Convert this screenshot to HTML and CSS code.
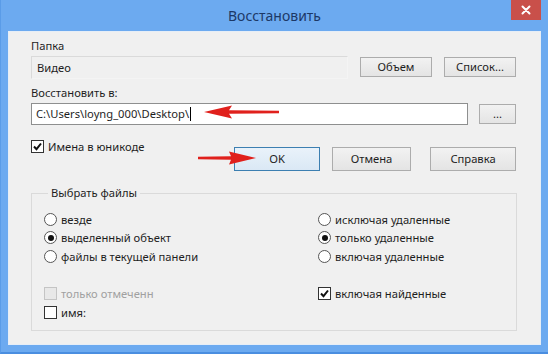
FILE: index.html
```html
<!DOCTYPE html>
<html lang="ru">
<head>
<meta charset="utf-8">
<title>Восстановить</title>
<link rel="stylesheet" href="styles.css">
</head>
<body>
<div class="window">
  <div class="titlebar">
    <span></span>
    <div class="title">Восстановить</div>
    <div class="close-wrap">
      <div class="close">
        <svg width="10" height="10" viewBox="0 0 10 10"><path d="M1.5 1.5 L8.5 8.5 M8.5 1.5 L1.5 8.5" stroke="#fff" stroke-width="2" stroke-linecap="round"/></svg>
      </div>
    </div>
  </div>
  <div class="content">
    <div class="label lbl-folder">Папка</div>
    <div class="row row-folder">
      <div class="field ro">Видео</div>
      <button class="btn btn-size">Объем</button>
      <button class="btn btn-list">Список...</button>
    </div>
    <div class="label lbl-restore">Восстановить в:</div>
    <div class="row row-path">
      <div class="field path">C:\Users\loyng_000\Desktop\<span class="caret"></span></div>
      <button class="btn btn-dots">...</button>
    </div>
    <div class="check-line uni">
      <span class="cb checked"><svg width="11" height="11" viewBox="0 0 11 11"><path d="M2 5.5 L4.5 8.2 L9 2.5" fill="none" stroke="#111" stroke-width="2"/></svg></span>
      <span>Имена в юникоде</span>
    </div>
    <div class="row row-btns">
      <button class="btn btn-ok">OK</button>
      <button class="btn btn-cancel">Отмена</button>
      <button class="btn btn-help">Справка</button>
    </div>
    <fieldset class="group">
      <legend>Выбрать файлы</legend>
      <div class="opts">
        <div class="opt"><span class="rb"></span><span>везде</span></div>
        <div class="opt"><span class="rb"></span><span>исключая удаленные</span></div>
        <div class="opt"><span class="rb on"></span><span>выделенный объект</span></div>
        <div class="opt"><span class="rb on"></span><span>только удаленные</span></div>
        <div class="opt"><span class="rb"></span><span>файлы в текущей панели</span></div>
        <div class="opt"><span class="rb"></span><span>включая удаленные</span></div>
        <div class="opt"></div>
        <div class="opt"></div>
        <div class="opt disabled"><span class="cb dis"></span><span>только отмеченн</span></div>
        <div class="opt"><span class="cb checked"><svg width="11" height="11" viewBox="0 0 11 11"><path d="M2 5.5 L4.5 8.2 L9 2.5" fill="none" stroke="#111" stroke-width="2"/></svg></span><span>включая найденные</span></div>
        <div class="opt"><span class="cb"></span><span>имя:</span></div>
        <div class="opt"></div>
      </div>
    </fieldset>
  </div>
  <svg class="arrow arrow-left" width="76" height="14" viewBox="0 0 76 14">
    <path d="M0 7 L28 0.5 L25 5.2 L75 5.8 L75 8.2 L25 8.8 L28 13.5 Z" fill="#e0201c"/>
  </svg>
  <svg class="arrow arrow-right" width="58" height="14" viewBox="0 0 58 14">
    <path d="M58 7 L31 0.5 L33 5.2 L0 5.8 L0 8.2 L33 8.8 L31 13.5 Z" fill="#e0201c"/>
  </svg>
</div>
</body>
</html>
```
FILE: styles.css
```css
* { box-sizing: border-box; }
html, body { margin: 0; padding: 0; background: #6caaf0; }
body {
  width: 548px;
  height: 354px;
  overflow: hidden;
  font-family: "Noto Sans", "Open Sans", sans-serif;
  font-size: 11.2px;
  color: #1e1e1e;
}
.window {
  position: relative;
  width: 548px;
  height: 354px;
  background: #6caaf0;
  border-bottom: 2px solid #4a8ee0;
  border-left: 1px solid #5a9ce8;
  display: flex;
  flex-direction: column;
}
.titlebar {
  height: 31px;
  display: grid;
  grid-template-columns: 1fr auto 1fr;
}
.title {
  font-size: 14px;
  line-height: 31px;
  color: #1c3866;
}
.close-wrap { display: flex; justify-content: flex-end; padding-right: 7px; }
.close {
  width: 30px;
  height: 20px;
  background: #c9504a;
  display: flex;
  align-items: center;
  justify-content: center;
}
.content {
  flex: 1;
  margin: 0 7px 7px 7px;
  background: #f0f0f0;
  border: 1px solid #e6eef7;
  padding: 6px 24px 0 22px;
}
.label { line-height: 16px; }
.row { display: flex; align-items: flex-start; }
.row-folder { margin-top: 2px; height: 23px; }
.field {
  height: 23px;
  line-height: 21px;
  padding-left: 5px;
}
.ro {
  width: 317px;
  border: 1px solid #dadada;
  border-right-color: #f4f4f4;
  border-bottom-color: #f4f4f4;
  background: #f0f0f0;
}
.btn {
  font-family: inherit;
  font-size: 11.2px;
  color: #1e1e1e;
  height: 20px;
  padding: 0;
  border: 1px solid #acacac;
  background: linear-gradient(#f2f2f2, #e4e4e4);
  border-radius: 0;
  line-height: 18px;
}
.btn-size { width: 72px; margin-left: 12px; margin-top: 1px; }
.btn-list { width: 72px; margin-left: 12px; margin-top: 1px; }
.lbl-restore { margin-top: 6px; }
.row-path { margin-top: 2px; }
.path {
  width: 437px;
  height: 22px;
  line-height: 20px;
  background: #fff;
  border: 1px solid #8e8f8f;
  padding-left: 4px;
}
.caret {
  display: inline-block;
  width: 1px;
  height: 14px;
  background: #000;
  vertical-align: -3px;
  margin-left: 1px;
}
.btn-dots { width: 37px; margin-left: 11px; margin-top: 1px; }
.check-line {
  display: flex;
  align-items: center;
  gap: 4px;
  height: 16px;
  margin-top: 13px;
}
.cb {
  width: 13px;
  height: 13px;
  border: 1px solid #333;
  background: #fff;
  display: inline-flex;
  align-items: center;
  justify-content: center;
  flex: none;
}
.cb.dis { border-color: #c4c4c4; background: #e8e8e8; }
.row-btns { margin-top: -7px; padding-left: 203px; }
.row-btns .btn { height: 24px; line-height: 22px; }
.btn-ok {
  width: 86px;
  border-color: #3c7fb1;
  background: linear-gradient(#e9f2fa, #dae8f5);
}
.btn-cancel { width: 79px; margin-left: 12px; }
.btn-help { width: 86px; margin-left: 19px; }
.group {
  margin: 14px 0 0 0;
  width: 486px;
  padding: 0 0 8px 12px;
  border: 1px solid #dadada;
  border-radius: 0;
}
.group legend {
  margin-left: 4px;
  padding: 0 3px;
  line-height: 16px;
}
.opts {
  display: grid;
  grid-template-columns: 274px 1fr;
  grid-auto-rows: 18.6px;
  padding-top: 9px;
}
.opt {
  display: flex;
  align-items: center;
  gap: 4px;
}
.opt.disabled { color: #a0a0a0; }
.rb {
  width: 13px;
  height: 13px;
  border-radius: 50%;
  border: 1px solid #555;
  background: #fff;
  flex: none;
  display: inline-flex;
  align-items: center;
  justify-content: center;
}
.rb.on::after {
  content: "";
  width: 6px;
  height: 6px;
  border-radius: 50%;
  background: #111;
}
.arrow { position: absolute; }
.arrow-left { left: 203px; top: 105px; }
.arrow-right { left: 197px; top: 151px; }
```
